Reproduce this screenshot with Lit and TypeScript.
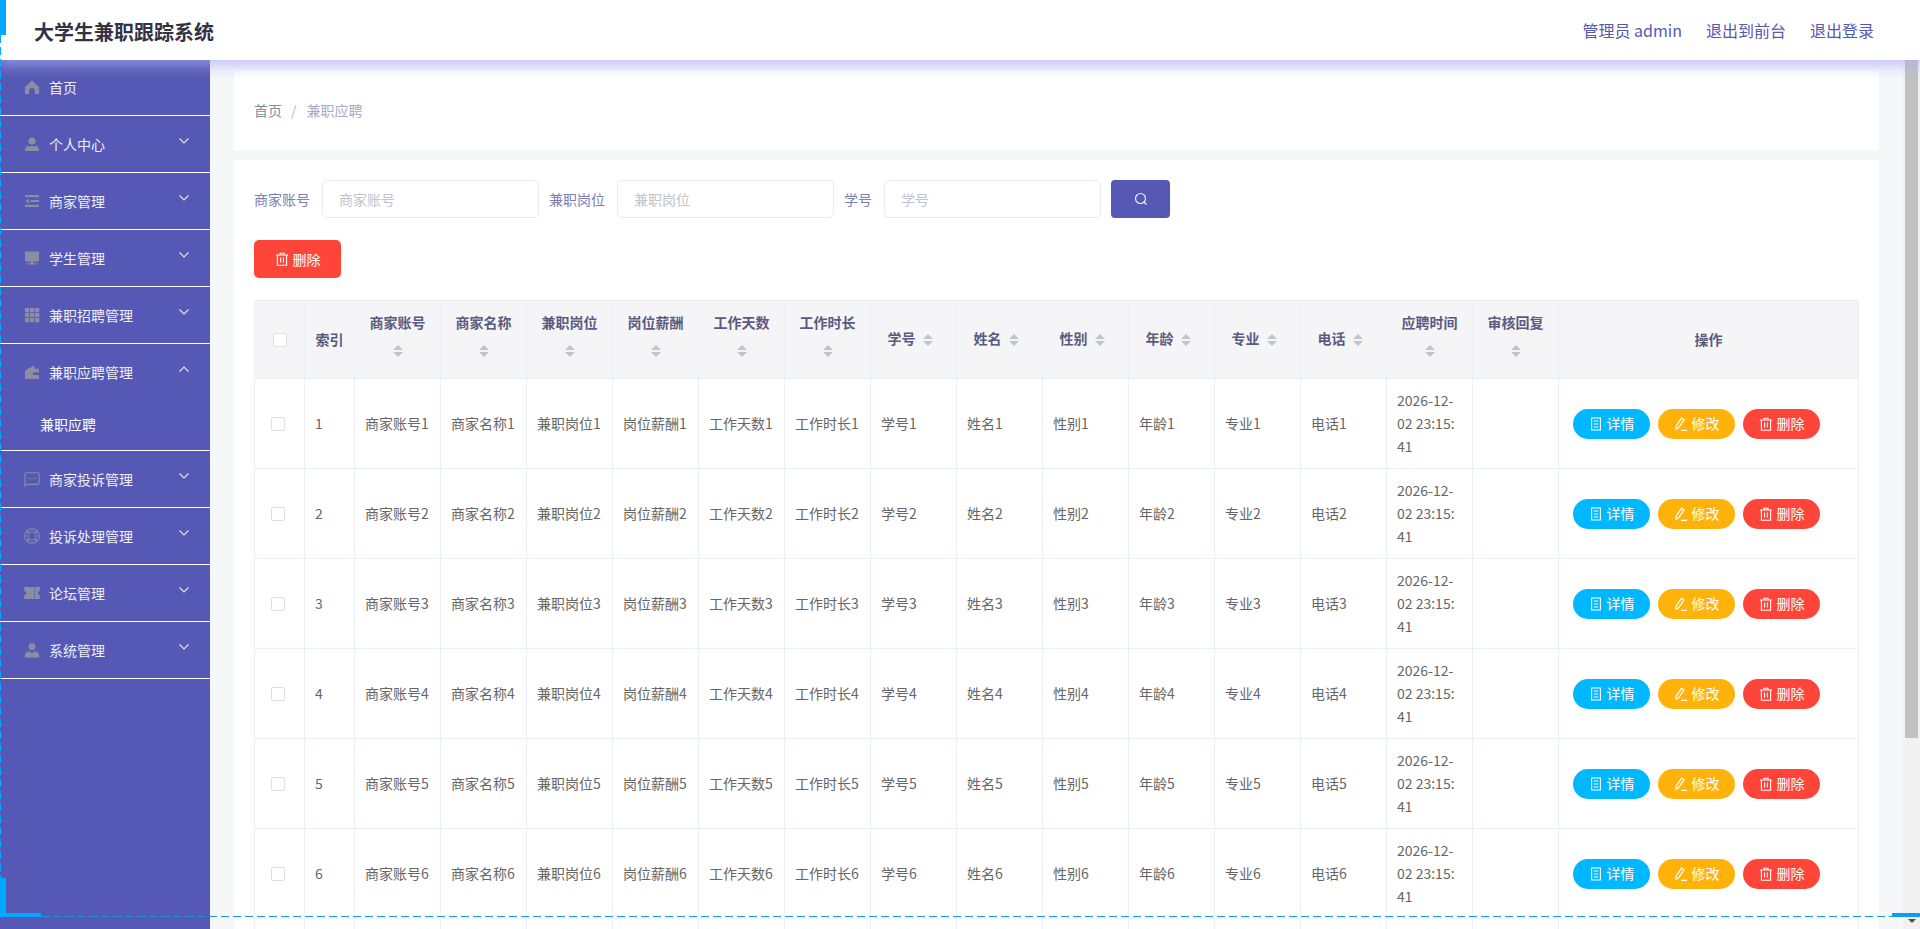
import { LitElement, html, css, svg } from "lit";
import { customElement } from "lit/decorators.js";

const ICONS: Record<string, unknown> = {
  home: svg`<path d="M8 1.6 1 8v7h4.2v-3.2a2.8 2.8 0 0 1 5.6 0V15H15V8z"/>`,
  user: svg`<circle cx="8" cy="5" r="3.6"/><path d="M1 15v-1.6C1 11.4 2.6 10 5 10h6c2.400 0 4 1.400 4 3.400V15z"/>`,
  list: svg`<path d="M1 2h14v2.200H1zM6.500 6.900H15v2.200H6.500zM1 11.800h14V14H1zM1.200 8 5 5.800v4.400z"/>`,
  monitor: svg`<path d="M1 1.400h14v10.200H1zM6.600 11.600h2.800v1.600H13v1.200H3v-1.200h3.600z"/>`,
  grid: svg`<path d="M1 1h4.300v4.300H1zM6 1h4.300v4.300H6zM11 1h4.300v4.300H11zM1 6h4.300v4.300H1zM6 6h4.300v4.300H6zM11 6h4.300v4.300H11zM1 11h4.300v4.300H1zM6 11h4.300v4.300H6zM11 11h4.300v4.300H11z"/>`,
  wallet: svg`<path fill-rule="evenodd" d="M1 6.500 9.500 1.800l1.500 3H15V15H1zM10 8.600a1.200 1.200 0 0 0 0 2.400h5V8.600z"/>`,
  chat: svg`<path fill="none" stroke="currentColor" stroke-width="1.100" d="M2.600 1.800h10.800a1.800 1.800 0 0 1 1.800 1.800v8a1.800 1.800 0 0 1-1.800 1.800H3.200L.9 15V3.600a1.800 1.800 0 0 1 1.700-1.800z"/><circle cx="5" cy="7.600" r=".75"/><circle cx="8" cy="7.600" r=".75"/><circle cx="11" cy="7.600" r=".75"/>`,
  ring: svg`<g fill="none" stroke="currentColor" stroke-width="1.100"><circle cx="8" cy="8" r="7.300"/><circle cx="8" cy="8" r="4"/><path d="m3 3 2.200 2.200M13 3l-2.200 2.200M3 13l2.200-2.200M13 13l-2.200-2.200"/></g>`,
  ticket: svg`<path d="M.2 2h15.600v4a2 2 0 0 0 0 4v4H.2v-4a2 2 0 0 0 0-4zM10 2.500v2h1v-2zM10 6v1.600h1V6zM10 8.600v1.600h1V8.600zM10 11.500v2h1v-2z" fill-rule="evenodd"/>`,
  admin: svg`<circle cx="8" cy="4.600" r="3.400"/><path d="M.8 15.400v-2.200C.8 11 3 9.400 5.600 9.200L8 11.600l2.400-2.400c2.600.2 4.800 1.800 4.800 4v2.200z"/>`,
};

const MENU = [
  { name: "首页", icon: "home", plain: true },
  { name: "个人中心", icon: "user" },
  { name: "商家管理", icon: "list" },
  { name: "学生管理", icon: "monitor" },
  { name: "兼职招聘管理", icon: "grid" },
  { name: "兼职应聘管理", icon: "wallet", open: true, sub: ["兼职应聘"] },
  { name: "商家投诉管理", icon: "chat" },
  { name: "投诉处理管理", icon: "ring" },
  { name: "论坛管理", icon: "ticket" },
  { name: "系统管理", icon: "admin" },
];

const COLS = ["商家账号", "商家名称", "兼职岗位", "岗位薪酬", "工作天数", "工作时长", "学号", "姓名", "性别", "年龄", "专业", "电话"];

const docIcon = svg`<path fill="none" stroke="#fff" stroke-width="1.100" d="M2.600 1h8.800v12H2.600zM4.800 4h4.400M4.800 7h4.400M4.800 10h4.400"/>`;
const editIcon = svg`<path fill="none" stroke="#fff" stroke-width="1.200" d="M7.600 1.200 10 2.800 4.600 10.800l-2.600 1.400.1-3zM7 13.400h6"/>`;
const delIcon = svg`<path fill="none" stroke="#fff" stroke-width="1.100" d="M1 3h12M5 3V1.200h4V3M2.400 3v10.200h9.200V3M5.600 5.600v5M8.400 5.600v5"/>`;

@customElement("app-root")
export class AppRoot extends LitElement {
  static styles = css`
    :host {
      display: block;
      width: 1920px;
      height: 929px;
      overflow: hidden;
      position: relative;
      font-family: "Noto Sans CJK SC", "Noto Sans", sans-serif;
      font-size: 14px;
      background: #f6f7f9;
    }
    .top {
      position: relative;
      z-index: 5;
      height: 60px;
      background: #fff;
      display: flex;
      align-items: center;
      padding: 0 46px 0 34px;
      box-shadow: 0 2px 14px 3px rgba(170, 172, 245, 0.75);
    }
    .title {
      font-size: 20px;
      font-weight: 700;
      color: #333344;
      margin-top: 2px;
      flex: 1;
    }
    .nav {
      font-size: 16px;
      color: #5558b4;
      margin-left: 24px;
    }
    .body {
      display: flex;
      height: 869px;
      overflow: hidden;
    }
    .side {
      width: 210px;
      flex: none;
      background: #5558b4;
      color: #eeeef8;
    }
    .group {
      border-bottom: 1px solid #fff;
    }
    .item {
      height: 56px;
      display: flex;
      align-items: center;
      padding-left: 24px;
    }
    .group:first-child .item {
      height: 53px;
      padding-bottom: 2px;
    }
    .ico {
      width: 16px;
      height: 16px;
      margin-right: 9px;
      flex: none;
      fill: #8c8da3;
      color: #8c8da3;
    }
    .chev {
      width: 10px;
      height: 6px;
      margin-left: auto;
      margin-right: 21px;
      margin-bottom: 6px;
      fill: none;
      stroke: #e8e8f6;
      stroke-width: 1.1;
    }
    .subitem {
      height: 50px;
      line-height: 49px;
      padding-left: 40px;
      color: #fff;
    }
    .main {
      flex: 1;
      min-width: 0;
      padding: 10px 24px 0;
      display: flex;
      flex-direction: column;
      gap: 10px;
    }
    .crumb {
      box-sizing: border-box;
      height: 80px;
      flex: none;
      background: #fff;
      display: flex;
      align-items: center;
      padding: 0 0 1px 20px;
      color: #858aa6;
    }
    .sep {
      color: #b4b8c8;
      margin: 0 10px 0 9px;
    }
    .crumb .last {
      color: #a6adc2;
    }
    .card {
      flex: 1;
      background: #fff;
      padding: 20px;
      overflow: hidden;
    }
    .search {
      display: flex;
      align-items: center;
      height: 38px;
      margin-bottom: 22px;
    }
    .label {
      color: #7a7fb5;
      margin-right: 12px;
    }
    .search input {
      box-sizing: border-box;
      width: 217px;
      height: 38px;
      margin-right: 10px;
      padding: 0 16px;
      border: 1px solid #e9e9fa;
      border-radius: 5px;
      outline: none;
      font: inherit;
      background: #fff;
    }
    .search input::placeholder {
      color: #c0c4cc;
    }
    .searchbtn {
      width: 59px;
      height: 38px;
      background: #5558b4;
      border-radius: 4px;
      display: flex;
      align-items: center;
      justify-content: center;
    }
    .searchbtn svg {
      width: 14px;
      height: 14px;
      fill: none;
      stroke: #e8eeff;
      stroke-width: 1.2;
    }
    .del {
      width: 87px;
      height: 38px;
      margin-bottom: 22px;
      background: #ff4539;
      color: #fff;
      border-radius: 5px;
      display: flex;
      align-items: center;
      justify-content: center;
    }
    .del svg,
    .btn svg {
      width: 14px;
      height: 14px;
      margin-right: 4px;
      flex: none;
    }
    table {
      width: 1605px;
      table-layout: fixed;
      border-collapse: separate;
      border-spacing: 0;
      border-top: 1px solid #edeff6;
      border-left: 1px solid #edeff6;
    }
    th,
    td {
      box-sizing: border-box;
      border-right: 1px solid #edeff6;
      border-bottom: 1px solid #edeff6;
      padding: 10px;
      line-height: 23px;
      text-align: left;
      color: #666;
      font-weight: 400;
    }
    th {
      background: #f5f5f8;
      color: #5a5b80;
      font-weight: 700;
      text-align: center;
    }
    tbody td:last-child {
      padding-left: 14px;
    }
    .stub td {
      height: 90px;
    }
    .caret {
      display: inline-flex;
      flex-direction: column;
      align-items: center;
      justify-content: center;
      width: 24px;
      height: 34px;
      vertical-align: middle;
    }
    .caret i {
      width: 0;
      height: 0;
      border-left: 5px solid transparent;
      border-right: 5px solid transparent;
    }
    .caret i:first-child {
      border-bottom: 5px solid #c0c4cc;
      margin-bottom: 2px;
    }
    .caret i:last-child {
      border-top: 5px solid #c0c4cc;
    }
    .check {
      display: block;
      box-sizing: border-box;
      width: 14px;
      height: 14px;
      border: 1px solid #dcdfe6;
      border-radius: 2px;
      background: #fff;
    }
    th .check {
      margin: 0 auto;
    }
    td.cb {
      padding-left: 16px;
    }
    .btns {
      display: flex;
      gap: 8px;
    }
    .btn {
      width: 77px;
      height: 30px;
      border-radius: 15px;
      color: #fff;
      display: flex;
      align-items: center;
      justify-content: center;
    }
    .b1 { background: #00b8ff; }
    .b2 { background: #ffb30a; }
    .b3 { background: #ff4539; }
    .rail {
      width: 17px;
      flex: none;
      background: #f1f1f1;
      display: flex;
      flex-direction: column;
      align-items: center;
    }
    .thumb {
      width: 13px;
      height: 678px;
      background: #c1c1c1;
    }
    .arrow {
      margin-top: auto;
      margin-bottom: 6px;
      width: 0;
      height: 0;
      border-left: 4px solid transparent;
      border-right: 4px solid transparent;
      border-top: 4px solid #505050;
    }
    .deco {
      position: absolute;
      z-index: 10;
    }
    .solid {
      background: #00a8ff;
    }
    .tl { left: 0; top: 0; width: 6px; height: 35px; }
    .bl1 { left: 0; top: 878px; width: 6px; height: 39px; }
    .bl2 { left: 0; top: 913px; width: 41px; height: 4px; }
    .br { left: 1892px; top: 913px; width: 28px; height: 4px; background: #109bf5; }
    .dash-v {
      left: 0;
      top: 35px;
      width: 1px;
      height: 843px;
      background: repeating-linear-gradient(180deg, #00a8ff 0 8px, transparent 8px 12px);
    }
    .dash-h {
      left: 41px;
      top: 916px;
      width: 1851px;
      height: 1px;
      background: repeating-linear-gradient(90deg, #1a94e6 0 8px, transparent 8px 12px);
    }
  `;

  private caret() {
    return html`<span class="caret"><i></i><i></i></span>`;
  }

  private row(i: number) {
    return html`<tr>
      <td class="cb"><span class="check"></span></td>
      <td>${i}</td>
      ${COLS.map((c) => html`<td>${c}${i}</td>`)}
      <td>2026-12-<br />02 23:15:<br />41</td>
      <td></td>
      <td>
        <div class="btns">
          <div class="btn b1"><svg viewBox="0 0 14 14">${docIcon}</svg>详情</div>
          <div class="btn b2"><svg viewBox="0 0 14 14">${editIcon}</svg>修改</div>
          <div class="btn b3"><svg viewBox="0 0 14 14">${delIcon}</svg>删除</div>
        </div>
      </td>
    </tr>`;
  }

  render() {
    return html`
      <div class="top">
        <div class="title">大学生兼职跟踪系统</div>
        <div class="nav">管理员 admin</div>
        <div class="nav">退出到前台</div>
        <div class="nav">退出登录</div>
      </div>
      <div class="body">
        <aside class="side">
          ${MENU.map(
            (m) => html`<div class="group">
              <div class="item">
                <svg class="ico" viewBox="0 0 16 16">${ICONS[m.icon]}</svg>
                <span>${m.name}</span>
                ${m.plain
                  ? ""
                  : html`<svg class="chev" viewBox="0 0 10 6">
                      <path d=${m.open ? "M.5 5.5 5 1l4.500 4.500" : "M.5.5 5 5 9.500.5"}></path>
                    </svg>`}
              </div>
              ${(m.sub || []).map((s) => html`<div class="subitem">${s}</div>`)}
            </div>`
          )}
        </aside>
        <main class="main">
          <div class="crumb">
            <span>首页</span><span class="sep">/</span><span class="last">兼职应聘</span>
          </div>
          <section class="card">
            <div class="search">
              <span class="label">商家账号</span><input placeholder="商家账号" />
              <span class="label">兼职岗位</span><input placeholder="兼职岗位" />
              <span class="label">学号</span><input placeholder="学号" />
              <div class="searchbtn">
                <svg viewBox="0 0 14 14"><circle cx="6.500" cy="6.500" r="5"></circle><path d="m10 10 2.500 2.500"></path></svg>
              </div>
            </div>
            <div class="del"><svg viewBox="0 0 14 14">${delIcon}</svg>删除</div>
            <table>
              <colgroup>
                <col style="width:50px" /><col style="width:50px" />
                ${[...COLS, "", ""].map(() => html`<col style="width:86px" />`)}
                <col style="width:300px" />
              </colgroup>
              <thead>
                <tr>
                  <th><span class="check"></span></th>
                  <th>索引</th>
                  ${COLS.map((c) => html`<th>${c}${this.caret()}</th>`)}
                  <th>应聘时间${this.caret()}</th>
                  <th>审核回复${this.caret()}</th>
                  <th>操作</th>
                </tr>
              </thead>
              <tbody>
                ${[1, 2, 3, 4, 5, 6].map((i) => this.row(i))}
                <tr class="stub">${[...COLS, "", "", "", "", ""].map(() => html`<td></td>`)}</tr>
              </tbody>
            </table>
          </section>
        </main>
        <div class="rail"><div class="thumb"></div><div class="arrow"></div></div>
      </div>
      <div class="deco solid tl"></div>
      <div class="deco solid bl1"></div>
      <div class="deco solid bl2"></div>
      <div class="deco br"></div>
      <div class="deco dash-v"></div>
      <div class="deco dash-h"></div>
    `;
  }
}
